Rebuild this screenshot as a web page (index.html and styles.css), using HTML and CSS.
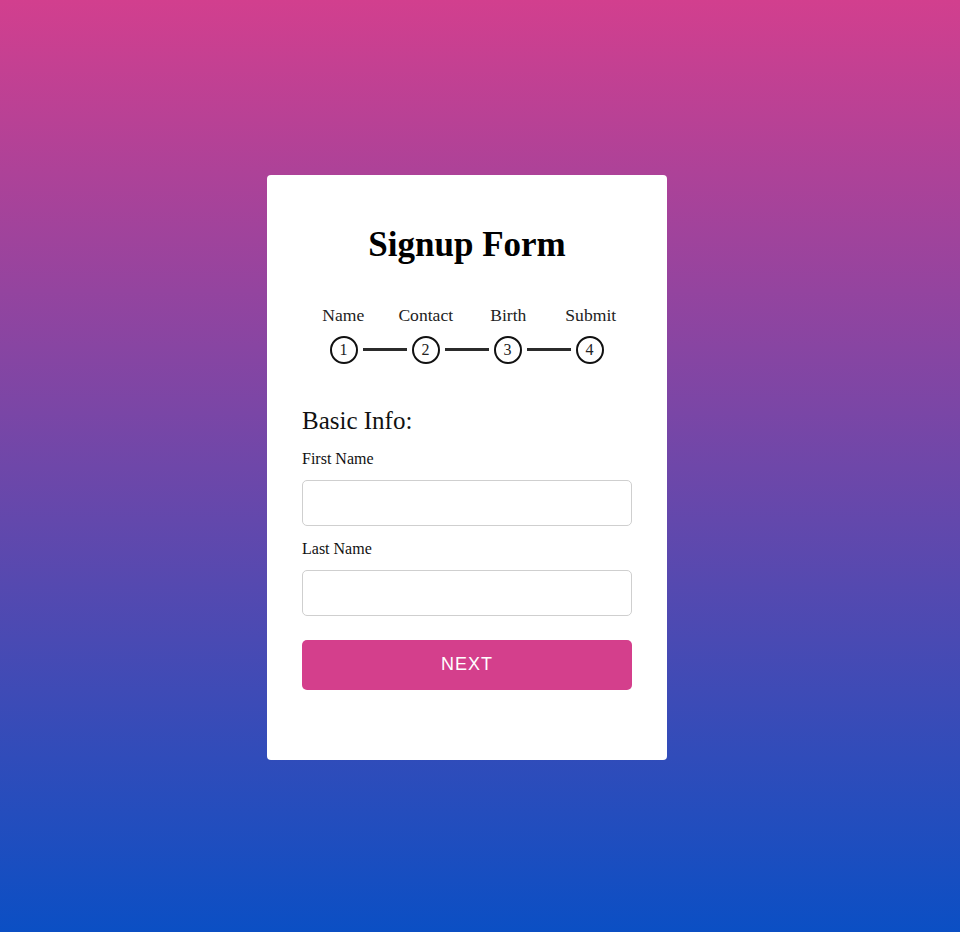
FILE: index.html
```html
<!DOCTYPE html>
<html lang="en">
<head>
<meta charset="utf-8">
<title>Signup Form</title>
<link rel="stylesheet" href="styles.css">
</head>
<body>
<div class="card">
  <h1 class="title">Signup Form</h1>
  <div class="steps">
    <div class="labels">
      <span>Name</span>
      <span>Contact</span>
      <span>Birth</span>
      <span>Submit</span>
    </div>
    <div class="track">
      <span class="dot">1</span>
      <span class="bar"></span>
      <span class="dot">2</span>
      <span class="bar"></span>
      <span class="dot">3</span>
      <span class="bar"></span>
      <span class="dot">4</span>
    </div>
  </div>
  <form class="form">
    <div class="section">Basic Info:</div>
    <label class="label" for="fn">First Name</label>
    <input class="field" id="fn" type="text">
    <label class="label" for="ln">Last Name</label>
    <input class="field" id="ln" type="text">
    <button class="next" type="button">NEXT</button>
  </form>
</div>
</body>
</html>
```
FILE: styles.css
```css
html, body {
  margin: 0;
  height: 100%;
}
body {
  background: linear-gradient(to bottom, #d23f8e 0%, #0b4fc4 100%);
  display: flex;
  align-items: center;
  justify-content: center;
  padding: 2px 26px 0 0;
  box-sizing: border-box;
  font-family: "Liberation Serif", "Times New Roman", serif;
  color: #111;
}
.card {
  width: 400px;
  height: 585px;
  box-sizing: border-box;
  background: #fff;
  border-radius: 4px;
  padding: 50px 35px 70px;
}
.title {
  margin: 0;
  font-size: 35px;
  line-height: 40px;
  font-weight: bold;
  text-align: center;
  color: #000;
}
.steps {
  margin-top: 40px;
}
.labels {
  display: grid;
  grid-template-columns: repeat(4, 1fr);
  text-align: center;
  font-size: 17.6px;
  line-height: 20px;
  color: #222;
}
.track {
  margin-top: 11px;
  display: flex;
  align-items: center;
  justify-content: center;
  padding-right: 1px;
}
.dot {
  width: 28px;
  height: 28px;
  box-sizing: border-box;
  border: 2px solid #111;
  border-radius: 50%;
  display: flex;
  align-items: center;
  justify-content: center;
  font-size: 16px;
  line-height: 1;
  color: #222;
}
.bar {
  width: 44px;
  height: 3px;
  margin: 0 5px;
  background: #2b2b2b;
}
.form {
  display: flex;
  flex-direction: column;
  margin-top: 42px;
}
.section {
  font-size: 25px;
  line-height: 30px;
  color: #111;
}
.label {
  margin-top: 13px;
  font-size: 16px;
  line-height: 20px;
  color: #111;
}
.field {
  margin: 11px 0 0;
  height: 46px;
  box-sizing: border-box;
  border: 1px solid #cfcfcf;
  border-radius: 5px;
  padding: 0 12px;
  font-size: 16px;
}
.next {
  margin-top: 24px;
  height: 50px;
  border: none;
  border-radius: 5px;
  background: #d43f8c;
  color: #fff;
  font-family: "Liberation Sans", Arial, sans-serif;
  font-size: 18px;
  letter-spacing: 1px;
}
```
